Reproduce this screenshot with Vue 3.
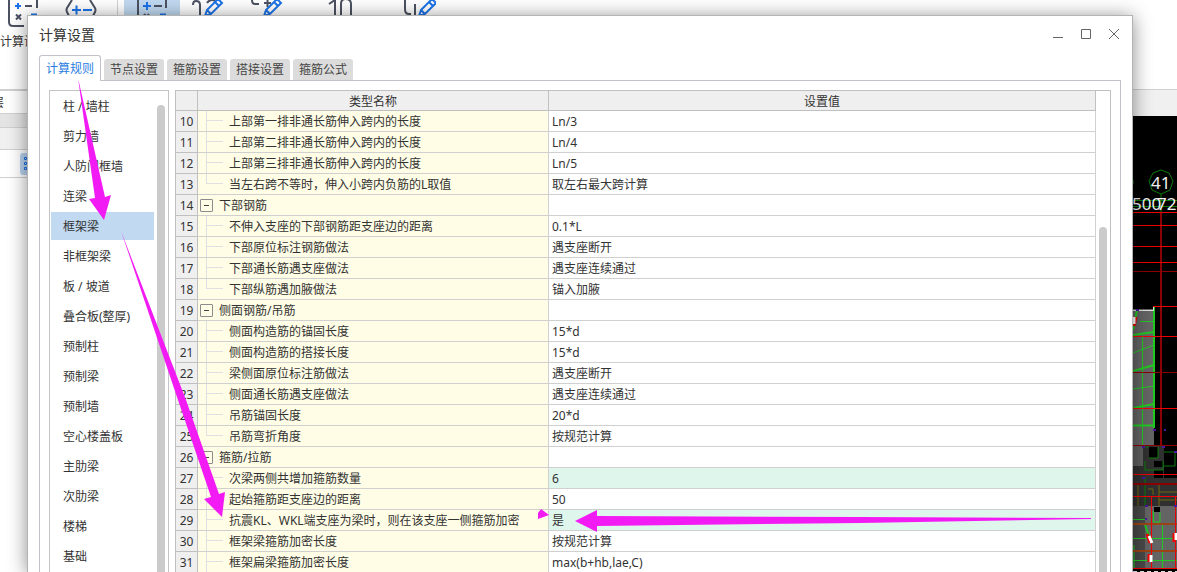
<script setup>
import { ref } from 'vue'

const tabs = ['计算规则', '节点设置', '箍筋设置', '搭接设置', '箍筋公式']
const activeTab = ref('计算规则')

const members = [
  '柱 / 墙柱', '剪力墙', '人防门框墙', '连梁', '框架梁', '非框架梁', '板 / 坡道', '叠合板(整厚)',
  '预制柱', '预制梁', '预制墙', '空心楼盖板', '主肋梁', '次肋梁', '楼梯', '基础'
]
const activeMember = ref('框架梁')

const rows = [
  { n: 10, name: '上部第一排非通长筋伸入跨内的长度', value: 'Ln/3' },
  { n: 11, name: '上部第二排非通长筋伸入跨内的长度', value: 'Ln/4' },
  { n: 12, name: '上部第三排非通长筋伸入跨内的长度', value: 'Ln/5' },
  { n: 13, name: '当左右跨不等时，伸入小跨内负筋的L取值', value: '取左右最大跨计算', last: true },
  { n: 14, name: '下部钢筋', value: '', group: true },
  { n: 15, name: '不伸入支座的下部钢筋距支座边的距离', value: '0.1*L' },
  { n: 16, name: '下部原位标注钢筋做法', value: '遇支座断开' },
  { n: 17, name: '下部通长筋遇支座做法', value: '遇支座连续通过' },
  { n: 18, name: '下部纵筋遇加腋做法', value: '锚入加腋', last: true },
  { n: 19, name: '侧面钢筋/吊筋', value: '', group: true },
  { n: 20, name: '侧面构造筋的锚固长度', value: '15*d' },
  { n: 21, name: '侧面构造筋的搭接长度', value: '15*d' },
  { n: 22, name: '梁侧面原位标注筋做法', value: '遇支座断开' },
  { n: 23, name: '侧面通长筋遇支座做法', value: '遇支座连续通过' },
  { n: 24, name: '吊筋锚固长度', value: '20*d' },
  { n: 25, name: '吊筋弯折角度', value: '按规范计算', last: true },
  { n: 26, name: '箍筋/拉筋', value: '', group: true },
  { n: 27, name: '次梁两侧共增加箍筋数量', value: '6', changed: true },
  { n: 28, name: '起始箍筋距支座边的距离', value: '50' },
  { n: 29, name: '抗震KL、WKL端支座为梁时，则在该支座一侧箍筋加密', value: '是', changed: true },
  { n: 30, name: '框架梁箍筋加密长度', value: '按规范计算' },
  { n: 31, name: '框架扁梁箍筋加密长度', value: 'max(b+hb,lae,C)' }
]
</script>

<template>
  <div class="desktop">
    <header class="ribbon">
      <button class="tool first" type="button">
        <svg width="32" height="28" viewBox="0 0 32 28">
          <path class="ink" d="M1 0V22Q1 26 5 26H16M29 0V8" />
          <path class="blue" d="M7 6H13M10 3V9M23 14.500H29" />
          <path class="ink" d="M17 6H24M8 14.500L13 19.500M13 14.500L8 19.500" />
        </svg>
        <span>计算设置</span>
      </button>
      <button class="tool second" type="button" aria-label="计算规则">
        <svg width="32" height="28" viewBox="0 0 32 28">
          <path class="ink" d="M7 0L2 8Q1 10 2 12L5 18M25 0L30 8Q31 10 30 12L27 18" />
          <path class="blue" d="M7 10H16M11.500 5.500V14.500M18 10H27" />
        </svg>
      </button>
      <i class="divider"></i>
      <button class="tool selected" type="button" aria-label="计算">
        <svg width="32" height="28" viewBox="0 0 32 28">
          <path class="ink" d="M2 0V28M30 0V8" />
          <path class="blue" d="M7 6H15M11 2V10M24 14.500H30" />
          <path class="ink" d="M18 6H26M8 14L13 19M13 14L8 19" />
        </svg>
      </button>
      <button class="tool" type="button" aria-label="编辑钢筋">
        <svg width="32" height="28" viewBox="0 0 32 28">
          <path class="ink" d="M1 5Q1 1 4 1Q8 1 8 5V20M15 3Q17 0 20 0Q23 0 23 2" />
          <path class="blue" d="M13 16L15 10L26 -1L30 3L19 14ZM15 10L19 14M23 2L27 6" />
        </svg>
      </button>
      <button class="tool wide" type="button" aria-label="编辑节点">
        <svg width="32" height="28" viewBox="0 0 32 28">
          <path class="ink" d="M1 0Q1 4 4 4H8M13 3H20M16.500 0V7" />
          <path class="blue" d="M13 16L15 10L26 -1L30 3L19 14ZM15 10L19 14M23 2L27 6" />
        </svg>
      </button>
      <button class="tool count" type="button" aria-label="数量">
        <svg width="32" height="28" viewBox="0 0 32 28">
          <path class="ink" d="M5 4L11 0V20M17 20V4Q17 -1 21.500 -1Q27 -1 27 4V20" />
        </svg>
      </button>
      <button class="tool hook" type="button" aria-label="弯钩">
        <svg width="32" height="28" viewBox="0 0 32 28">
          <path class="ink" d="M1 0V9Q1 14 5 14H7M11 4V18" />
          <path class="blue" d="M15 16L17 10L28 -1L32 3L21 14ZM17 10L21 14M25 2L29 6" />
        </svg>
      </button>
    </header>

    <main class="workspace">
      <aside class="browser">
        <div class="floor"><span>层</span></div>
        <div class="band"></div>
        <div class="caption"></div>
        <div class="views">
          <button type="button" aria-label="列表">
            <svg width="12" height="16" viewBox="0 0 12 16">
              <path class="dots" d="M1.500 1.500h2v2h-2zM1.500 6.500h2v2h-2zM1.500 11.500h2v2h-2zM6 2.500h6M6 7.500h6M6 12.500h6" />
            </svg>
          </button>
        </div>
      </aside>
      <section class="stage">
        <div class="stage-bar"></div>
        <svg class="cad" width="44" height="456" viewBox="1133 116 44 456">
          <rect x="1133" y="309" width="21" height="137" fill="#646464" />
          <rect x="1133" y="446" width="10" height="20" fill="#5e5e5e" />
          <path d="M1133 466H1143V446H1164V478H1177V506H1133Z" fill="#303030" />
          <path d="M1149 447h9v11h-9zM1154 461h9v6h-9zM1154 470h9v8h-9zM1164 453h11v13h-11z" fill="#000" />
          <path d="M1133 506H1145V524H1177V568H1133Z" fill="#484848" />
          <path d="M1145 506H1177V568H1145Z" fill="#646464" />
          <rect x="1154" y="507" width="6" height="5" fill="#000" />
          <g fill="none" stroke="#0b7a0b">
            <path d="M1161 170L1169 173L1173 181L1170 190L1161 194L1152 190L1149 181L1153 173ZM1161 194V212M1133 200.500H1177M1133 206.500H1177M1133 180V184" />
            <path d="M1143 447H1149M1158 447V458H1149M1163 461V470H1145V461M1164 452H1175V466H1163M1145 478V506" />
          </g>
          <g fill="none" stroke="#22c822">
            <path d="M1142.500 336V445M1140 321.500H1154M1133 353L1154 345M1133 389L1154 386" />
            <path stroke-width="2" d="M1154 306V428M1133 335L1154 332M1133 371L1154 365M1133 408L1154 404M1133 425.500H1154" />
            <path d="M1133 519.500H1145M1133 538.500H1177M1133 560.500H1177M1162.500 525V568M1153.500 511V522H1160V512M1134 545V568" />
            <path stroke-width="2" d="M1133 330L1137 310M1145 525L1150 538" />
          </g>
          <path fill="none" stroke="#716411" d="M1138 484V506M1148 489H1153V495M1159 484V506M1159 492H1177M1159 500H1177" />
          <path fill="none" stroke="#dedede" d="M1133 310.500H1153.500V307" />
          <g fill="none" stroke="#8b0000">
            <path stroke-width="2" d="M1161 212V446M1133 484H1177" />
            <path d="M1133 271.500H1177M1133 372.500H1177M1133 445.500H1177" />
          </g>
          <path fill="none" stroke="#9b4316" stroke-width="2" d="M1133 524H1177M1133 551H1177" />
          <path fill="none" stroke="#f00000" d="M1133 212.500H1177M1133 225.500H1177M1133 246.500H1177M1133 262.500H1177M1153 306.500H1177M1133 336.500H1177M1133 408.500H1177M1133 474.500H1177M1133 496.500H1177M1133 568.500H1177M1151.500 496V568M1175.500 496V568" />
          <path fill="none" stroke="#f00000" stroke-width="3" d="M1136 317L1134 326M1147 534L1150 543M1149 554L1149 562M1174 533V542" />
          <path fill="none" stroke="#fff" stroke-width="3" d="M1149 536L1152 543M1151 555V562M1176 533V540M1134 317V324" />
          <path fill="#49169c" d="M1136 309h3v2h-3zM1153 429h3v2h-3zM1164 429h2v2h-2zM1142 446h3v2h-3zM1162 446h3v2h-3zM1142 477h3v2h-3zM1174 451h3v2h-3zM1145 505h3v2h-3zM1174 505h3v2h-3zM1145 518h2v2h-2z" />
          <path stroke="#ddd" stroke-dasharray="4 3" d="M1133 571.500H1177" />
          <g fill="#f2f2f2" class="cad-text">
            <text x="1151" y="189">41</text>
            <text x="1132" y="210">500</text>
            <text x="1157" y="210">72</text>
          </g>
        </svg>
      </section>
    </main>

    <section class="dialog" role="dialog" aria-labelledby="dialog-title">
      <div class="titlebar">
        <h1 id="dialog-title">计算设置</h1>
        <div class="window-buttons">
          <button type="button" aria-label="最小化"><svg width="12" height="12"><path d="M1 9.500H11" /></svg></button>
          <button type="button" aria-label="最大化"><svg width="12" height="12"><path d="M1.500 1.500H10.500V10.500H1.500Z" /></svg></button>
          <button type="button" aria-label="关闭"><svg width="12" height="12"><path d="M1 1L11 11M11 1L1 11" /></svg></button>
        </div>
      </div>

      <div class="tabs" role="tablist">
        <button
          v-for="tab in tabs"
          :key="tab"
          type="button"
          role="tab"
          :aria-selected="tab === activeTab"
          :class="{ active: tab === activeTab }"
          @click="activeTab = tab"
        >{{ tab }}</button>
      </div>

      <div class="panel">
        <nav class="members">
          <div class="member-list">
            <button
              v-for="member in members"
              :key="member"
              type="button"
              :class="{ active: member === activeMember }"
              @click="activeMember = member"
            >{{ member }}</button>
          </div>
          <div class="track side"><i></i></div>
        </nav>

        <div class="grid">
          <table>
            <colgroup><col class="c-num" /><col class="c-name" /><col /></colgroup>
            <thead>
              <tr><th></th><th>类型名称</th><th>设置值</th></tr>
            </thead>
            <tbody>
              <tr v-for="row in rows" :key="row.n">
                <th scope="row">{{ row.n }}</th>
                <td class="name">
                  <div :class="['cell', row.group ? 'group' : 'leaf', { last: row.last }]">
                    <button v-if="row.group" class="toggle" type="button" aria-label="折叠"></button>
                    <i v-else class="branch"></i>
                    <span>{{ row.name }}</span>
                  </div>
                </td>
                <td :class="['value', { changed: row.changed }]">{{ row.value }}</td>
              </tr>
            </tbody>
          </table>
          <div class="track"><i></i></div>
        </div>
      </div>
    </section>

    <svg class="arrows" aria-hidden="true">
      <path d="M78 78L105 197L111 195L104 220L89 199L95 198Z" />
      <path d="M121 231L186 400L219 494L225 492L222 517L204 499L211 497L178 400Z" />
      <path d="M575 521L597 510V516L860 517L1091 518V519L860 523L597 526V532Z" />
      <path d="M541 509L549 515L538 519V513Z" />
    </svg>
  </div>
</template>

<style>
body {
  margin: 0;
}
</style>

<style scoped>
.desktop {
  position: relative;
  display: flex;
  flex-direction: column;
  height: 100vh;
  overflow: hidden;
  background: #fff;
  color: #333;
  font: 12px/20px "Noto Sans", "Noto Sans CJK SC", sans-serif;
}
.desktop *,
.desktop *::before {
  box-sizing: border-box;
}
button {
  padding: 0;
  border: 0;
  background: none;
  color: inherit;
  font: inherit;
}
svg {
  display: block;
}

.ribbon {
  display: flex;
  flex: none;
  height: 90px;
  border-bottom: 1px solid #d0d0d0;
}
.tool {
  display: flex;
  flex: none;
  flex-direction: column;
  align-items: center;
  width: 56px;
  gap: 4px;
}
.tool.first {
  width: 48px;
}
.tool.second {
  width: 66px;
}
.tool.wide {
  width: 62px;
}
.tool.count {
  width: 84px;
}
.tool.hook {
  width: 76px;
}
.tool.selected {
  background: #c1d9f1;
}
.divider {
  width: 1px;
  height: 80px;
  margin: 0 6px 0 3px;
  background: #d4d4d4;
}
.ink {
  fill: none;
  stroke: #4c5262;
  stroke-width: 2;
}
.blue {
  fill: none;
  stroke: #1a73e8;
  stroke-width: 2;
}

.workspace {
  display: flex;
  flex: 1;
  min-height: 0;
}
.browser {
  width: 220px;
}
.floor {
  height: 24px;
  padding-top: 2px;
  border: solid #d0d0d0;
  border-width: 1px 0;
  overflow: hidden;
}
.floor span {
  display: block;
  width: 4px;
  direction: rtl;
  white-space: nowrap;
}
.band {
  height: 13px;
  background: #e4e4e4;
}
.caption {
  height: 23px;
  border: solid #d0d0d0;
  border-width: 1px 0;
  background: #f0f0f0;
}
.views {
  display: flex;
  align-items: center;
  height: 28px;
  padding-left: 20px;
  border-bottom: 1px solid #d0d0d0;
}
.views button {
  width: 24px;
  height: 22px;
  padding-left: 3px;
  border-radius: 3px;
  background: #b9d3f0;
}
.dots {
  fill: none;
  stroke: #1a73e8;
}
.stage {
  display: flex;
  flex: 1;
  flex-direction: column;
  align-items: flex-end;
  background: #000;
}
.stage-bar {
  flex: none;
  align-self: stretch;
  height: 26px;
  background: #f0f0f0;
}
.cad {
  flex: none;
}
.cad-text {
  font: 17px "Noto Sans", sans-serif;
}

.dialog {
  position: absolute;
  inset: 15px 44px 0 27px;
  display: flex;
  flex-direction: column;
  padding: 0 11px;
  border: 1px solid #b4b4b4;
  border-bottom: 0;
  background: #fff;
  box-shadow: 0 2px 18px rgba(0, 0, 0, 0.45);
}
.titlebar {
  display: flex;
  flex: none;
  justify-content: space-between;
  height: 39px;
}
h1 {
  margin: 0;
  font-size: 14px;
  font-weight: 400;
  line-height: 38px;
}
.window-buttons {
  display: flex;
  gap: 16px;
  padding: 12px 1px 0 0;
}
.window-buttons button {
  width: 12px;
  height: 12px;
}
.window-buttons path {
  fill: none;
  stroke: #666;
}
.tabs {
  display: flex;
  flex: none;
  align-items: flex-end;
  gap: 3px;
  height: 26px;
}
.tabs button {
  width: 60px;
  height: 21px;
  margin-bottom: 1px;
  padding-top: 1px;
  border-radius: 3px 3px 0 0;
  background: #dcdcdc;
  color: #444;
}
.tabs .active {
  z-index: 1;
  width: 62px;
  height: 26px;
  margin-bottom: 0;
  border: 1px solid #c0c3ca;
  border-bottom: 0;
  background: #fff;
  color: #2a7de1;
}
.panel {
  display: flex;
  flex: 1;
  gap: 6px;
  min-height: 0;
  margin-top: -1px;
  padding: 9px 9px 0;
  border: 1px solid #c0c3ca;
  border-bottom: 0;
}
.members {
  display: flex;
  flex: none;
  width: 120px;
  border: 1px solid #c4c4c4;
  border-bottom: 0;
  overflow: hidden;
}
.member-list {
  display: flex;
  flex: 1;
  flex-direction: column;
  gap: 2px;
  padding: 1px 0 0 1px;
}
.member-list button {
  flex: none;
  height: 28px;
  padding: 2px 0 0 12px;
  text-align: left;
}
.member-list .active {
  background: #c1d9f1;
}
.track {
  flex: none;
  width: 14px;
  padding: 136px 3px 0;
}
.track.side {
  padding-top: 14px;
}
.track i {
  display: block;
  width: 8px;
  height: 100%;
  border-radius: 4px 4px 0 0;
  background: #cbcbcb;
}
.grid {
  display: flex;
  flex: 1;
  min-width: 0;
  border: 1px solid #c0c0c0;
  border-bottom: 0;
  overflow: hidden;
}
table {
  flex: 1;
  align-self: flex-start;
  width: 100%;
  table-layout: fixed;
  border-spacing: 0;
}
.c-num {
  width: 22px;
}
.c-name {
  width: 351px;
}
th,
td {
  height: 21px;
  padding: 2px 0 0;
  border: solid #d0d0d0;
  border-width: 0 1px 1px 0;
  font-weight: 400;
  line-height: 18px;
  text-align: left;
  white-space: nowrap;
}
thead th {
  height: 20px;
  line-height: 17px;
}
th {
  background: #efefef;
  border-color: #c0c0c0;
  text-align: center;
}
.name {
  padding: 0;
  background: #fffde6;
}
.value {
  padding-left: 3px;
}
.changed {
  background: #dff6ec;
}
.cell {
  display: flex;
  align-items: center;
  height: 20px;
}
.cell span {
  padding-top: 2px;
}
.leaf {
  gap: 6px;
  padding-left: 8px;
}
.group {
  gap: 6px;
  padding-left: 2px;
}
.branch {
  align-self: stretch;
  width: 17px;
  border-left: 1px solid #e0e0e4;
}
.branch::before {
  content: "";
  display: block;
  height: 10px;
  border-bottom: 1px solid #e0e0e4;
}
.last .branch {
  height: 10px;
  align-self: flex-start;
}
.toggle {
  display: grid;
  place-items: center;
  width: 13px;
  height: 13px;
  border: 1px solid #8c8c8c;
  border-radius: 1px;
}
.toggle::before {
  content: "";
  width: 5px;
  height: 1px;
  background: #444;
}
.arrows {
  position: absolute;
  inset: 0;
  width: 100%;
  height: 100%;
  fill: #f31bf3;
  pointer-events: none;
}
</style>
